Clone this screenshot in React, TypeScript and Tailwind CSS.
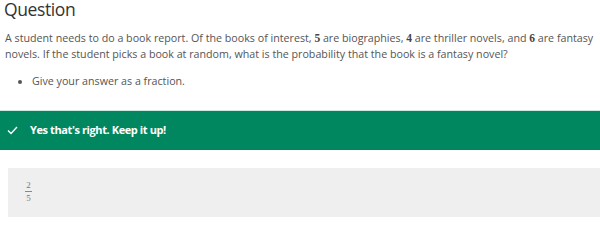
export default function App() {
  return (
    <div className="w-[600px] h-[226px] overflow-hidden bg-white font-['Open_Sans',sans-serif]">
      <h2 className="pl-[4px] text-[17.5px] leading-[18px] tracking-[-0.4px] text-[#333]">Question</h2>

      <div className="px-[5px] pt-[12px] text-[10.7px] leading-[16px] text-[#555]">
        <p>
          A student needs to do a book report. Of the books of interest,{" "}
          <span className="font-['Liberation_Serif',serif] font-bold text-[11.5px] leading-[10px] text-[#444]">5</span> are biographies,{" "}
          <span className="font-['Liberation_Serif',serif] font-bold text-[11.5px] leading-[10px] text-[#444]">4</span> are thriller novels, and{" "}
          <span className="font-['Liberation_Serif',serif] font-bold text-[11.5px] leading-[10px] text-[#444]">6</span> are fantasy novels. If the
          student picks a book at random, what is the probability that the book is a fantasy novel?
        </p>
        <ul className="mt-[11px] pl-[27px] list-disc">
          <li>Give your answer as a fraction.</li>
        </ul>
      </div>

      {/* feedback */}
      <div className="mt-[21px] h-[40px] bg-[#00875f] border-t border-[#cde8dc] flex items-center pl-[7px] gap-[12px] text-white">
        <svg width="11" height="9" viewBox="0 0 11 9" fill="none" stroke="white" strokeWidth="1.4">
          <path d="M1 4.5 L4 7.5 L10 1" />
        </svg>
        <span className="text-[11px] font-bold tracking-[-0.4px]">Yes that's right. Keep it up!</span>
      </div>

      {/* answer */}
      <div className="mt-[18px] ml-[8px] h-[49px] bg-[#efefef] flex items-center pl-[17px]">
        <div className="flex flex-col items-center font-['Liberation_Serif',serif] text-[9px] leading-[8px] text-[#777] -mt-[2px]">
          <span>2</span>
          <span className="w-[7px] border-t border-[#888] my-[2px]" />
          <span>5</span>
        </div>
      </div>
    </div>
  );
}
